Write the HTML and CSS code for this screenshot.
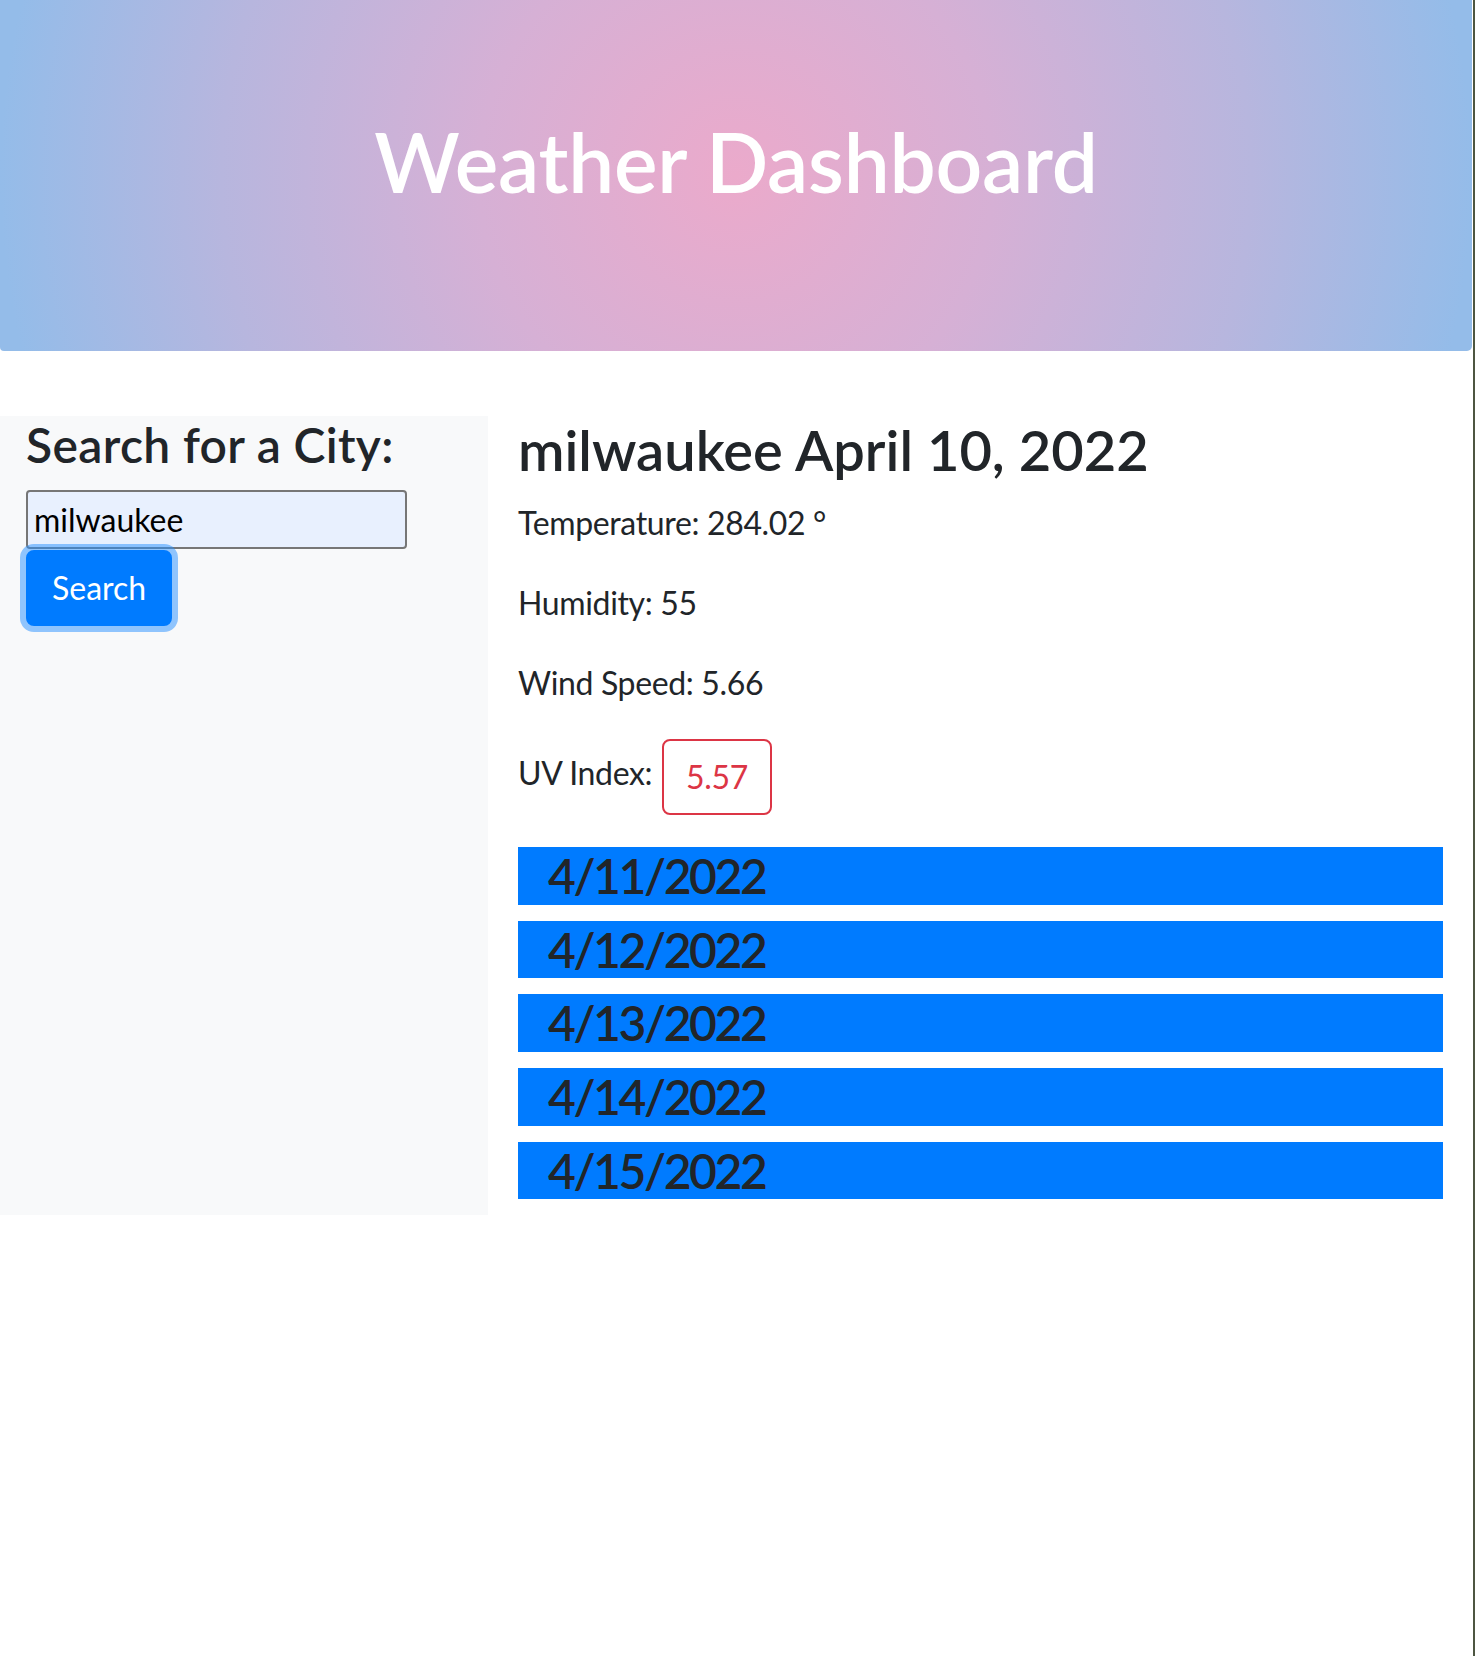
FILE: index.html
```html
<!DOCTYPE html>
<html lang="en">
<head>
<meta charset="utf-8">
<title>Weather Dashboard</title>
<link rel="stylesheet" href="styles.css">
</head>
<body>
<div class="page">
  <header class="hero">
    <h1 class="hero-title">Weather Dashboard</h1>
  </header>
  <main class="layout">
    <aside class="sidebar">
      <h4 class="sidebar-title">Search for a City:</h4>
      <input class="city-input" type="text" value="milwaukee">
      <button class="search-btn" type="button">Search</button>
    </aside>
    <section class="current">
      <h3 class="city-heading">milwaukee April 10, 2022</h3>
      <p class="stat">Temperature: 284.02 °</p>
      <p class="stat">Humidity: 55</p>
      <p class="stat">Wind Speed: 5.66</p>
      <p class="stat">UV Index: <span class="uv-badge">5.57</span></p>
      <h4 class="forecast-day">4/11/2022</h4>
      <h4 class="forecast-day">4/12/2022</h4>
      <h4 class="forecast-day">4/13/2022</h4>
      <h4 class="forecast-day">4/14/2022</h4>
      <h4 class="forecast-day">4/15/2022</h4>
    </section>
  </main>
</div>
</body>
</html>
```

FILE: styles.css
```css
html, body {
  margin: 0;
  padding: 0;
  background: #ffffff;
}

body {
  font-family: Lato, "Open Sans", "Noto Sans", sans-serif;
  font-size: 32px;
  line-height: 1.5;
  color: #212529;
  min-height: 1656px;
  box-sizing: border-box;
  border-right: 2px solid #4d5641;
}

.page {
  width: 100%;
}

.hero {
  box-sizing: border-box;
  height: 351px;
  padding-top: 112px;
  margin-right: 1px;
  border-radius: 0 0 5px 4px;
  background: radial-gradient(circle farthest-side at 50% 50%, #ebaacb 0%, #d6b0d5 35%, #b7b6de 70%, #94bce9 100%);
  text-align: center;
}

.hero-title {
  margin: 0;
  font-size: 82px;
  line-height: 1.2;
  font-weight: 600;
  letter-spacing: -0.2px;
  color: #ffffff;
}

.layout {
  margin-top: 65px;
  display: grid;
  grid-template-columns: 488px 1fr;
}

.sidebar {
  background: #f8f9fa;
  padding: 0 26px;
}

.sidebar-title {
  margin: 0 0 16px;
  font-size: 48px;
  line-height: 1.2;
  font-weight: 600;
  letter-spacing: 0.35px;
}

.city-input {
  display: block;
  box-sizing: border-box;
  width: 381px;
  height: 59px;
  margin: 0;
  padding: 0 6px;
  border: 2px solid #767676;
  border-radius: 4px;
  background: #e8f0fe;
  font-family: inherit;
  font-size: 32px;
  color: #000000;
}

.search-btn {
  display: block;
  box-sizing: border-box;
  margin-top: 1px;
  height: 76px;
  padding: 12px 24px;
  border: 2px solid #007bff;
  border-radius: 8px;
  background: #007bff;
  color: #ffffff;
  font-family: inherit;
  font-size: 32px;
  line-height: 48px;
  box-shadow: 0 0 0 6px rgba(38, 143, 255, 0.5);
}

.current {
  padding: 0 30px;
}

.city-heading {
  margin: 0 0 16px;
  font-size: 56px;
  line-height: 1.2;
  font-weight: 600;
}

.stat {
  margin: 0 0 32px;
  letter-spacing: -0.35px;
}

.uv-badge {
  display: inline-block;
  vertical-align: middle;
  margin-left: 2px;
  padding: 12px 22px;
  border: 2px solid #dc3545;
  border-radius: 8px;
  color: #dc3545;
  line-height: 48px;
}

.forecast-day {
  margin: 0 0 16px;
  padding-left: 30px;
  background: #007bff;
  color: #212529;
  font-size: 48px;
  line-height: 1.2;
  font-weight: 600;
  letter-spacing: -2.4px;
}
```
